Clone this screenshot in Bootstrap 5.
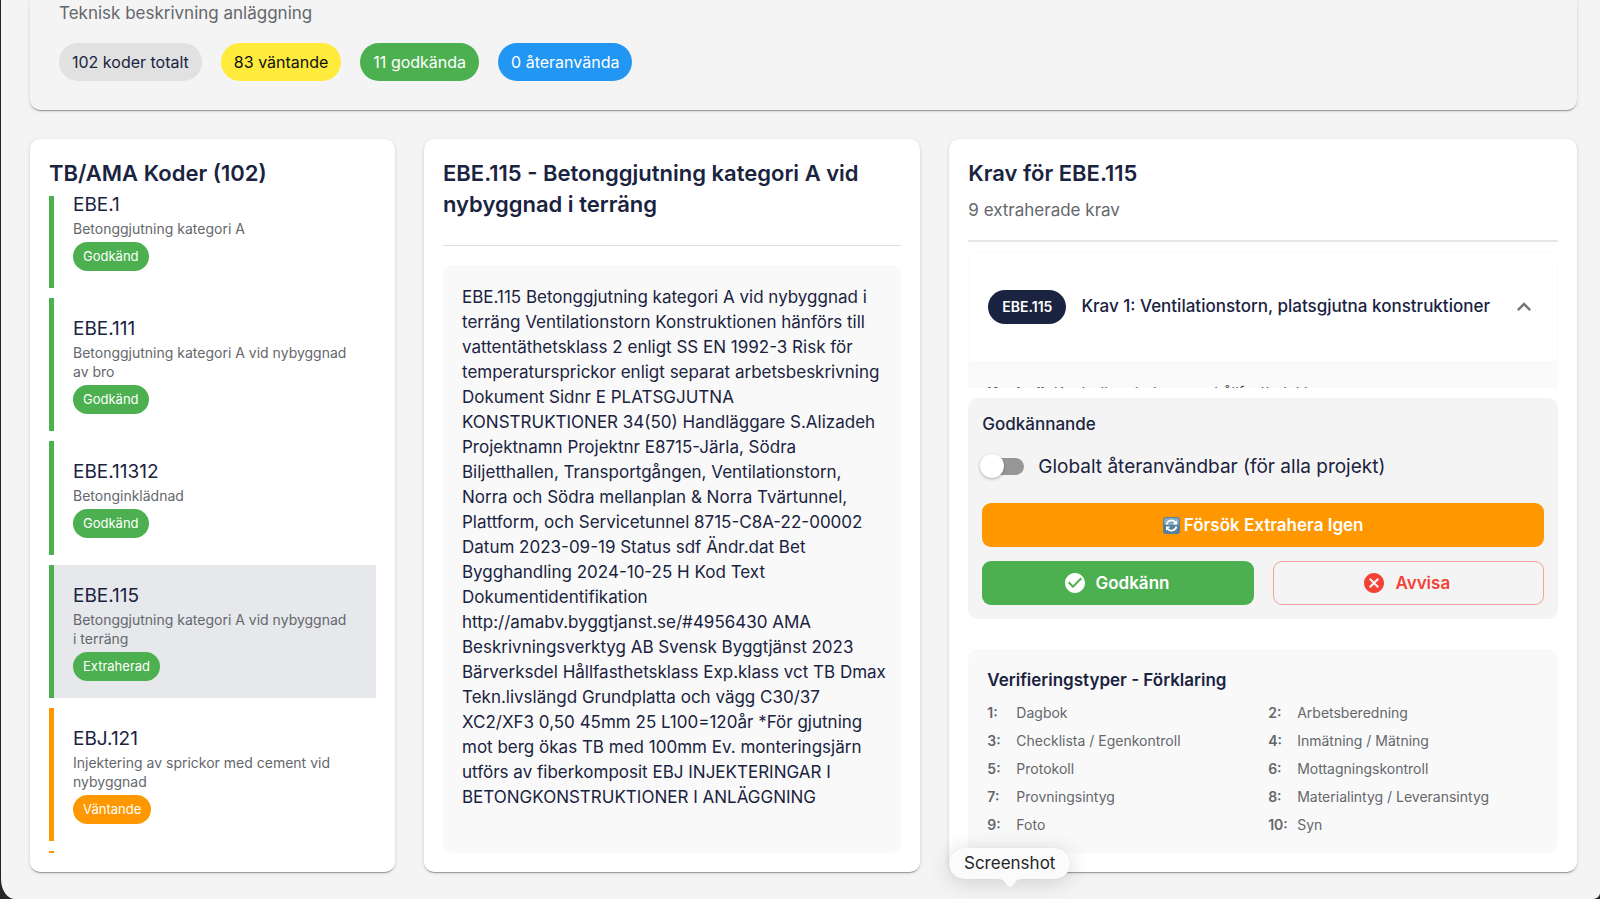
<!DOCTYPE html>
<html lang="sv">
<head>
<meta charset="utf-8">
<meta name="viewport" content="width=device-width, initial-scale=1">
<title>TB/AMA Koder</title>
<link href="https://cdn.jsdelivr.net/npm/bootstrap@5.3.0/dist/css/bootstrap.min.css" rel="stylesheet">
<style>
  :root { --ink: #1a2340; --muted: #64676c; --green: #4caf50; --orange: #ff9800; --red: #f44336; --pad: 19px; --radius: 10px; }
  body { background: #262626; color: var(--ink); font-family: Inter, "Liberation Sans", sans-serif; font-size: 17px; line-height: 25px; }
  .app-window { margin-left: 1px; padding: 0 23px 27px 29px; background: #f4f4f4; border-radius: 0 0 7px 14px / 0 0 6px 20px; overflow: hidden; }
  .panel { background: #fff; border-radius: var(--radius); box-shadow: 0 2px 1px -1px rgba(0,0,0,.22), 0 1px 1px rgba(0,0,0,.14), 0 1px 4px rgba(0,0,0,.12); padding: var(--pad); }
  .summary { background: #f4f4f4; border-radius: 0 0 var(--radius) var(--radius); padding: 0 29px 29px; }
  .summary-sub { line-height: 26px; margin-bottom: 17px; }
  .text-soft { color: var(--muted); }
  .panel-row { --bs-gutter-x: 29px; margin-top: 29px; min-height: 0; }
  .panel-title { font-size: 22px; line-height: 31px; font-weight: 600; margin: 0; }
  .detail-title { padding-bottom: 6px; }
  .gap-pad { gap: var(--pad); }
  .pill { border-radius: 19px; padding: 6px 13px; font-size: 16px; line-height: 26px; }
  .fill-grey { background: #e1e1e1; }
  .fill-yellow { background: #ffeb3b; color: #111; }
  .fill-blue { background: #2196f3; color: #fff; }
  .fill-green { background: var(--green); color: #fff; }
  .fill-orange { background: var(--orange); color: #fff; }
  .pill-sm { display: inline-block; border-radius: 15px; padding: 5px 10px; font-size: 13px; line-height: 19px; }
  .pill-ink { background: var(--ink); color: #fff; font-size: 14px; line-height: 20px; font-weight: 600; padding: 7px 14px; border-radius: 17px; margin-right: 15px; }
  .scroll-box { overflow-y: auto; scrollbar-width: none; }
  .scroll-box::-webkit-scrollbar { display: none; }
  .code-list { margin-top: 7px; }
  .code-item { border-left: 5px solid var(--green); padding: 19px 24px 17px 19px; margin-bottom: 10px; min-height: 114px; }
  .code-item.waiting { border-color: var(--orange); }
  .code-item.selected { background: #e6e8ec; }
  .code-name { font-size: 19px; line-height: 24px; margin-bottom: 2px; }
  .code-desc { font-size: 14px; line-height: 19px; margin-bottom: 4px; color: var(--muted); }
  .soft-box { background: #f9f9f9; border-radius: var(--radius); padding: var(--pad); }
  .source-text { padding: 20px 12px 19px 19px; }
  .rule { border-top: 1px solid #dedede; }
  .rule-thick { border-top: 2px solid #e6e6e6; }
  .req-count { margin: 9px 0 17px; }
  .req-scroll { height: 137px; margin-top: 9px; }
  .req-head { height: 110px; padding: 0 19px; background: none; border: 1px solid #fafafa; border-bottom: 0; border-radius: var(--radius) var(--radius) 0 0; color: var(--ink); font-weight: 500; }
  .req-body { background: #fafafa; padding: 19px; font-size: 15px; color: #55585e; }
  .approve { background: #f4f4f4; border-radius: var(--radius); padding: 14px; margin-top: 10px; }
  .approve-title { font-weight: 500; }
  .switch-row { margin: 17px 0 24px; }
  .switch-row label { font-size: 19px; }
  .switch { appearance: none; width: 40px; height: 17px; border-radius: 9px; background: #979797; margin: 0 14px 0 2px; position: relative; }
  .switch::before { content: ""; position: absolute; left: -4px; top: -4px; width: 24px; height: 24px; border-radius: 50%; background: #fff; box-shadow: 0 1px 3px rgba(0,0,0,.3); }
  .action { height: 44px; border-radius: 9px; border: 0; font-size: 17px; font-weight: 600; padding: 0; display: flex; align-items: center; justify-content: center; }
  .action-row { margin-top: 14px; }
  .action-row .action { gap: 9px; padding-right: 4px; }
  .action-red { border: 1px solid #f6a09a; color: var(--red); background: none; }
  .legend-box { padding-bottom: 18px; }
  .legend-title { font-weight: 600; margin-bottom: 9px; }
  .legend { display: grid; grid-template-columns: 1fr 1fr; gap: 7px 10px; font-size: 14px; line-height: 21px; color: var(--muted); }
  .legend b { display: inline-block; width: 29px; font-weight: 600; }
  .dock-tip { position: absolute; left: 949px; bottom: 20px; background: #fbfbfb; color: #262626; border-radius: 15px; padding: 3px 15px; box-shadow: 0 3px 22px rgba(0,0,0,.16), 0 0 1px rgba(0,0,0,.15); }
  .dock-tip svg { position: absolute; left: 50%; top: 100%; margin-left: -12px; }
</style>
</head>
<body>
<div class="app-window vh-100 d-flex flex-column">
  <header class="panel summary">
    <div class="text-soft summary-sub">Teknisk beskrivning anläggning</div>
    <div class="d-flex gap-pad">
      <span class="pill fill-grey">102 koder totalt</span>
      <span class="pill fill-yellow">83 väntande</span>
      <span class="pill fill-green">11 godkända</span>
      <span class="pill fill-blue">0 återanvända</span>
    </div>
  </header>

  <main class="row panel-row flex-grow-1">
    <section class="col-3 h-100">
      <div class="panel h-100 d-flex flex-column">
        <h2 class="panel-title">TB/AMA Koder (102)</h2>
        <div class="scroll-box code-list flex-grow-1" id="codes">
          <div class="code-item"><div class="code-name">EBE.1</div><div class="code-desc">Betonggjutning kategori A</div><span class="pill-sm fill-green">Godkänd</span></div>
          <div class="code-item"><div class="code-name">EBE.111</div><div class="code-desc">Betonggjutning kategori A vid nybyggnad av bro</div><span class="pill-sm fill-green">Godkänd</span></div>
          <div class="code-item"><div class="code-name">EBE.11312</div><div class="code-desc">Betonginklädnad</div><span class="pill-sm fill-green">Godkänd</span></div>
          <div class="code-item selected"><div class="code-name">EBE.115</div><div class="code-desc">Betonggjutning kategori A vid nybyggnad i terräng</div><span class="pill-sm fill-green">Extraherad</span></div>
          <div class="code-item waiting"><div class="code-name">EBJ.121</div><div class="code-desc">Injektering av sprickor med cement vid nybyggnad</div><span class="pill-sm fill-orange">Väntande</span></div>
          <div class="code-item waiting"></div>
        </div>
      </div>
    </section>

    <section class="col-4 h-100">
      <div class="panel h-100 d-flex flex-column gap-pad">
        <h2 class="panel-title detail-title">EBE.115 - Betonggjutning kategori A vid nybyggnad i terräng</h2>
        <div class="rule"></div>
        <div class="soft-box source-text flex-grow-1">EBE.115 Betonggjutning kategori A vid nybyggnad i terräng Ventilationstorn Konstruktionen hänförs till vattentäthetsklass 2 enligt SS EN 1992-3 Risk för temperatursprickor enligt separat arbetsbeskrivning Dokument Sidnr E PLATSGJUTNA KONSTRUKTIONER 34(50) Handläggare S.Alizadeh Projektnamn Projektnr E8715-Järla, Södra Biljetthallen, Transportgången, Ventilationstorn, Norra och Södra mellanplan &amp; Norra Tvärtunnel, Plattform, och Servicetunnel 8715-C8A-22-00002 Datum 2023-09-19 Status sdf Ändr.dat Bet Bygghandling 2024-10-25 H Kod Text Dokumentidentifikation http://amabv.byggtjanst.se/#4956430 AMA Beskrivningsverktyg AB Svensk Byggtjänst 2023 Bärverksdel Hållfasthetsklass Exp.klass vct TB Dmax Tekn.livslängd Grundplatta och vägg C30/37 XC2/XF3 0,50 45mm 25 L100=120år *För gjutning mot berg ökas TB med 100mm Ev. monteringsjärn utförs av fiberkomposit EBJ INJEKTERINGAR I BETONGKONSTRUKTIONER I ANLÄGGNING</div>
      </div>
    </section>

    <section class="col-5 h-100">
      <div class="panel h-100 d-flex flex-column">
        <h2 class="panel-title">Krav för EBE.115</h2>
        <div class="text-soft req-count">9 extraherade krav</div>
        <div class="rule-thick"></div>
        <div class="scroll-box req-scroll flex-shrink-0">
          <button type="button" class="req-head w-100 d-flex align-items-center text-start" aria-expanded="true">
            <span class="pill-ink">EBE.115</span>
            <span class="flex-grow-1">Krav 1: Ventilationstorn, platsgjutna konstruktioner</span>
            <svg width="28" height="28" viewBox="0 0 24 24" fill="#757575" aria-hidden="true"><path d="M12 8l-6 6 1.41 1.41L12 10.83l4.59 4.58L18 14z"/></svg>
          </button>
          <div class="req-body"><b>Kontroll:</b> Kontrollera betongens hållfasthetsklass</div>
        </div>
        <div class="approve">
          <div class="approve-title">Godkännande</div>
          <div class="d-flex align-items-center switch-row">
            <input class="switch" type="checkbox" role="switch" id="reuse">
            <label for="reuse">Globalt återanvändbar (för alla projekt)</label>
          </div>
          <button type="button" class="action fill-orange w-100">
            <svg class="me-1" width="17" height="17" viewBox="0 0 17 17" aria-hidden="true"><rect width="17" height="17" rx="3" fill="#54809f"/><rect x="1" y="1" width="15" height="7" rx="2" fill="#86a9c2"/><path d="M3.600 7.500a5 5 0 0 1 9-2M13.400 9.500a5 5 0 0 1-9 2" fill="none" stroke="#fff" stroke-width="1.700"/><path d="M14 3.200v4.300H9.700zM3 13.800V9.500h4.300z" fill="#fff"/></svg>Försök Extrahera Igen
          </button>
          <div class="d-flex gap-pad action-row">
            <button type="button" class="action fill-green flex-fill w-50"><svg width="24" height="24" viewBox="0 0 24 24" fill="#fff" aria-hidden="true"><path d="M12 2C6.480 2 2 6.480 2 12s4.480 10 10 10 10-4.480 10-10S17.520 2 12 2m-2 15-5-5 1.410-1.410L10 14.170l7.590-7.590L19 8z"/></svg><span>Godkänn</span></button>
            <button type="button" class="action action-red flex-fill w-50"><svg width="24" height="24" viewBox="0 0 24 24" fill="#f44336" aria-hidden="true"><path d="M12 2C6.470 2 2 6.470 2 12s4.470 10 10 10 10-4.470 10-10S17.530 2 12 2m5 13.590L15.590 17 12 13.410 8.410 17 7 15.590 10.590 12 7 8.410 8.410 7 12 10.590 15.590 7 17 8.410 13.410 12z"/></svg><span>Avvisa</span></button>
          </div>
        </div>
        <div class="soft-box legend-box mt-auto">
          <div class="legend-title">Verifieringstyper - Förklaring</div>
          <div class="legend">
            <div><b>1:</b>Dagbok</div><div><b>2:</b>Arbetsberedning</div>
            <div><b>3:</b>Checklista / Egenkontroll</div><div><b>4:</b>Inmätning / Mätning</div>
            <div><b>5:</b>Protokoll</div><div><b>6:</b>Mottagningskontroll</div>
            <div><b>7:</b>Provningsintyg</div><div><b>8:</b>Materialintyg / Leveransintyg</div>
            <div><b>9:</b>Foto</div><div><b>10:</b>Syn</div>
          </div>
        </div>
      </div>
    </section>
  </main>
</div>
<div class="dock-tip" role="tooltip">Screenshot<svg width="24" height="9" viewBox="0 0 24 9" aria-hidden="true"><path d="M0 0C5 0 7 3 9 6q3 4 6 0c2-3 4-6 9-6z" fill="#fbfbfb"/></svg></div>
<script src="https://cdn.jsdelivr.net/npm/bootstrap@5.3.0/dist/js/bootstrap.bundle.min.js"></script>
<script>document.getElementById('codes').scrollTop = 22;</script>
</body>
</html>
